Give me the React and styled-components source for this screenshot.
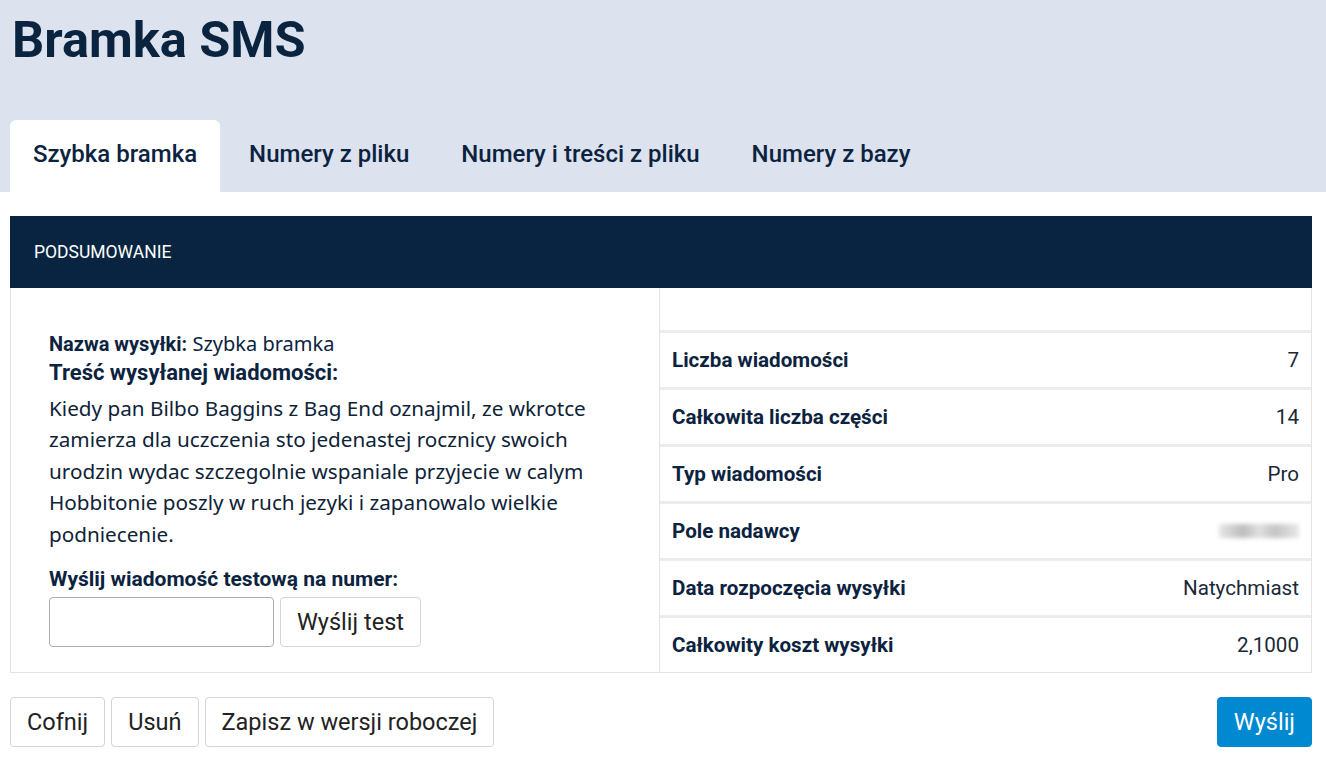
import React from "react";
import styled, { createGlobalStyle } from "styled-components";

const GlobalStyle = createGlobalStyle`
  body {
    margin: 0;
    background: #fff;
    font-family: "Roboto", "Liberation Sans", sans-serif;
    color: #0b2340;
  }
`;

const Header = styled.header`
  background: #dce2ee;
  padding: 0 10px;
`;

const Title = styled.h1`
  margin: 0;
  padding: 10px 2px 0;
  height: 120px;
  box-sizing: border-box;
  font-size: 50.5px;
  font-weight: 700;
  color: #0a2440;
`;

const Tabs = styled.nav`
  display: flex;
  gap: 6px;
  height: 72px;
`;

const Tab = styled.div`
  display: flex;
  align-items: center;
  padding: 0 23px 4px;
  font-size: 24px;
  font-weight: 500;
  color: #0b2340;
  border-radius: 6px 6px 0 0;
  background: ${(p) => (p.$active ? "#fff" : "transparent")};
`;

const Main = styled.main`
  padding: 24px 14px 0 10px;
`;

const Card = styled.section`
  border: 1px solid #e3e3e3;
  border-top: none;
`;

const CardHeader = styled.div`
  background: #082440;
  color: #fff;
  height: 72px;
  display: flex;
  align-items: center;
  padding: 0 24px;
  font-size: 17.5px;
  margin: 0 -1px;
`;

const CardBody = styled.div`
  display: grid;
  grid-template-columns: 649px 1fr;
`;

const LeftCol = styled.div`
  padding: 42px 38px 22px;
  border-right: 1px solid #e3e3e3;
`;

const NameLine = styled.div`
  font-size: 20px;
  line-height: 28px;
  font-family: "Noto Sans", sans-serif;
  b {
    font-family: "Roboto", sans-serif;
    font-weight: 700;
  }
`;

const MsgTitle = styled.div`
  font-size: 22px;
  font-weight: 700;
  line-height: 30px;
`;

const Message = styled.p`
  margin: 5px 0 0;
  font-family: "Noto Sans", sans-serif;
  font-size: 20.7px;
  line-height: 31.4px;
  color: #0e2238;
  max-width: 560px;
`;

const TestLabel = styled.div`
  margin-top: 16px;
  font-size: 21px;
  font-weight: 700;
  line-height: 26px;
`;

const TestRow = styled.div`
  display: flex;
  gap: 6px;
  margin-top: 5px;
`;

const Input = styled.input`
  width: 225px;
  height: 50px;
  box-sizing: border-box;
  border: 1px solid #a8adb3;
  border-radius: 4px;
  font-size: 18px;
`;

const Button = styled.button`
  height: 50px;
  padding: 0 16px;
  font-family: "Roboto", sans-serif;
  font-size: 23.5px;
  background: ${(p) => (p.$primary ? "#0088d1" : "#fff")};
  color: ${(p) => (p.$primary ? "#fff" : "#222")};
  border: 1px solid ${(p) => (p.$primary ? "#0088d1" : "#d4d4d4")};
  border-radius: 4px;
  cursor: pointer;
`;

const RightCol = styled.div`
  display: flex;
  flex-direction: column;
`;

const Spacer = styled.div`
  height: 42px;
`;

const Row = styled.div`
  display: flex;
  align-items: center;
  justify-content: space-between;
  height: 54px;
  border-top: 3px solid #ececec;
  padding: 0 12px;
  font-size: 20.6px;
`;

const Label = styled.span`
  font-weight: 700;
`;

const Value = styled.span`
  color: #1a2838;
`;

const Blurred = styled.span`
  display: inline-block;
  width: 80px;
  height: 14px;
  background: linear-gradient(90deg, #e6e6e6, #bdbdbd 30%, #e0e0e0 50%, #c4c4c4 70%, #e8e8e8);
  filter: blur(2px);
`;

const Footer = styled.footer`
  display: flex;
  justify-content: space-between;
  padding: 24px 14px 0 10px;
`;

const Group = styled.div`
  display: flex;
  gap: 6px;
`;

const rows = [
  ["Liczba wiadomości", "7"],
  ["Całkowita liczba części", "14"],
  ["Typ wiadomości", "Pro"],
  ["Pole nadawcy", null],
  ["Data rozpoczęcia wysyłki", "Natychmiast"],
  ["Całkowity koszt wysyłki", "2,1000"],
];

export default function App() {
  return (
    <>
      <GlobalStyle />
      <Header>
        <Title>Bramka SMS</Title>
        <Tabs>
          <Tab $active>Szybka bramka</Tab>
          <Tab>Numery z pliku</Tab>
          <Tab>Numery i treści z pliku</Tab>
          <Tab>Numery z bazy</Tab>
        </Tabs>
      </Header>

      <Main>
        <Card>
          <CardHeader>PODSUMOWANIE</CardHeader>
          <CardBody>
            <LeftCol>
              <NameLine>
                <b>Nazwa wysyłki:</b> Szybka bramka
              </NameLine>
              <MsgTitle>Treść wysyłanej wiadomości:</MsgTitle>
              <Message>
                Kiedy pan Bilbo Baggins z Bag End oznajmil, ze wkrotce zamierza
                dla uczczenia sto jedenastej rocznicy swoich urodzin wydac
                szczegolnie wspaniale przyjecie w calym Hobbitonie poszly w ruch
                jezyki i zapanowalo wielkie podniecenie.
              </Message>
              <TestLabel>Wyślij wiadomość testową na numer:</TestLabel>
              <TestRow>
                <Input />
                <Button>Wyślij test</Button>
              </TestRow>
            </LeftCol>
            <RightCol>
              <Spacer />
              {rows.map(([label, value]) => (
                <Row key={label}>
                  <Label>{label}</Label>
                  {value ? <Value>{value}</Value> : <Blurred />}
                </Row>
              ))}
            </RightCol>
          </CardBody>
        </Card>
      </Main>

      <Footer>
        <Group>
          <Button>Cofnij</Button>
          <Button>Usuń</Button>
          <Button>Zapisz w wersji roboczej</Button>
        </Group>
        <Button $primary>Wyślij</Button>
      </Footer>
    </>
  );
}
